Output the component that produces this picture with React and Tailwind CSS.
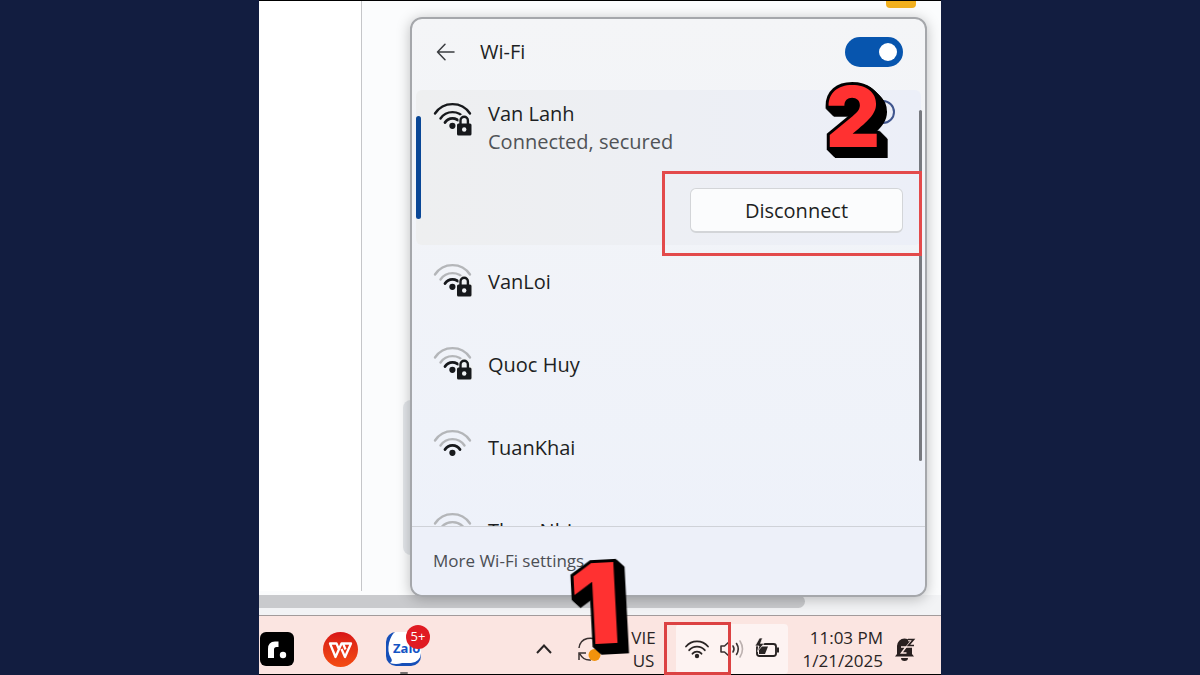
import { useState } from "react";

const networks = [
  { name: "VanLoi", secured: true },
  { name: "Quoc Huy", secured: true },
  { name: "TuanKhai", secured: false },
  { name: "Thao Nhi", secured: false },
];

const WifiSignal = ({ strong, secured }) => {
  const weak = strong ? "#17191c" : "#b4b6b9";
  return (
    <svg viewBox="0 0 40 36" className="w-10 h-9 shrink-0" fill="none" strokeLinecap="round">
      <path d="M2 13.5A21 21 0 0 1 37 13.5" stroke={weak} strokeWidth="2.4" />
      <path d="M7.5 18.5A14.5 14.5 0 0 1 31.5 18.5" stroke={weak} strokeWidth="2.4" />
      <path d="M12 22.5A8.8 8.8 0 0 1 27 22.5" stroke="#17191c" strokeWidth="2.8" />
      <circle cx="19.4" cy="25.8" r="3.1" fill="#17191c" />
      {secured && (
        <g>
          <path d="M23 36V21.500H25.500V19.500a5.700 5.700 0 0 1 11.400 0V21.500H40V36Z" fill="#f0f2f4" />
          <path d="M27.500 24V20.500a3.700 3.700 0 0 1 7.400 0V24" stroke="#17191c" strokeWidth="2.4" />
          <rect x="24" y="23.500" width="14.500" height="12" rx="1.500" fill="#17191c" />
          <circle cx="31.200" cy="29.500" r="2.200" fill="#f0f2f4" />
        </g>
      )}
    </svg>
  );
};

const WifiPanel = () => {
  const [enabled, setEnabled] = useState(true);

  return (
    <section className="relative z-10 ml-12 mr-3.5 flex flex-col rounded-xl border-2 border-[#a5a7ab] bg-gradient-to-b from-[#f4f5f7] to-[#edf1fa] shadow-[0_2px_14px_rgba(0,0,0,0.25)]">
      {/* Header */}
      <header className="flex h-[71px] items-center pb-1.5 pl-5 pr-[22px]">
        <button type="button" aria-label="Back" className="flex h-8 w-8 items-center justify-start pl-1">
          <svg viewBox="0 0 20 20" className="w-5 h-5" fill="none" stroke="#3a3c40" strokeWidth="1.5" strokeLinecap="round" strokeLinejoin="round">
            <path d="M18 10H1.500M9 2.200 1.500 10 9 17.800" />
          </svg>
        </button>
        <label htmlFor="wifi-switch" className="ml-4 flex-1 text-xl text-[#1d1f23]">
          Wi-Fi
        </label>
        <input
          id="wifi-switch"
          type="checkbox"
          role="switch"
          checked={enabled}
          onChange={(e) => setEnabled(e.target.checked)}
          className="flex h-[30px] w-[58px] appearance-none items-center rounded-full bg-gray-400 px-1.5 before:h-[18px] before:w-[18px] before:rounded-full before:bg-white checked:justify-end checked:bg-[#0755ae]"
        />
      </header>

      {/* Network list */}
      <div className="relative h-[437px] overflow-hidden border-b border-[#cfd2d8] px-1">
        <div className="relative flex h-[155px] flex-col rounded-md bg-gradient-to-r from-[#eeeff0] to-[#eceff8]">
          <span className="absolute left-0 top-[26px] h-[103px] w-[5px] rounded-full bg-[#0a4796]" />
          <div className="flex pl-[17px] pt-2.5">
            <WifiSignal strong secured />
            <div className="ml-[15px] text-xl leading-7">
              <p className="text-[#1d1f23]">Van Lanh</p>
              <p className="text-[#505357]">Connected, secured</p>
            </div>
            <button type="button" aria-label="Properties" className="ml-auto mr-[26px] h-6 w-6 rounded-full border-2 border-[#40568e]" />
          </div>
          <button
            type="button"
            className="mb-3 mr-[18px] mt-auto h-[45px] w-[213px] self-end rounded-md border border-b-2 border-[#d3d5d8] bg-[#fbfcfd] pt-0.5 text-xl text-[#1d1f23]"
          >
            Disconnect
          </button>
        </div>

        <ul>
          {networks.map((network) => (
            <li key={network.name} className="flex h-[83px] pl-[17px] pt-4">
              <WifiSignal secured={network.secured} />
              <span className="ml-[15px] mt-[7px] text-xl leading-7 text-[#1d1f23]">{network.name}</span>
            </li>
          ))}
        </ul>
        <span className="absolute right-[3px] top-5 h-[351px] w-[3px] rounded-full bg-[#77797f]" />
      </div>

      <footer className="flex h-[68px] items-center rounded-b-xl bg-[#edf0f9] pl-[21px]">
        <a href="#" className="text-[17px] leading-6 text-[#4b4e54]">
          More Wi-Fi settings
        </a>
      </footer>

      {/* Step 2 */}
      <div className="absolute right-[3px] top-[152px] h-[85px] w-[260px] border-3 border-[#e34a4b]" />
      <Step className="absolute right-[45px] top-[56px] text-[84px]">2</Step>
    </section>
  );
};

const Step = ({ className, children }) => (
  <span
    className={`${className} z-20 font-[Inter,sans-serif] font-black leading-none text-[#ff3131] [paint-order:stroke_fill] [-webkit-text-stroke:6px_#000] [filter:drop-shadow(1px_1px_0_#000)_drop-shadow(2px_2px_0_#000)_drop-shadow(4px_4px_0_#000)_drop-shadow(1px_1px_0_#000)]`}
  >
    {children}
  </span>
);

const Taskbar = () => (
  <footer className="relative flex h-[59px] items-center border-b border-black bg-[#fbe5e1] pr-[24px] pt-2">
    <button type="button" aria-label="r." className="ml-px flex h-[34px] w-[34px] rounded-md bg-black">
      <svg viewBox="0 0 34 34" className="w-full h-full">
        <path d="M8 26V17Q8 9.500 15 9.500H18.500V15H16.500Q14 15 14 17.500V26Z" fill="#fff" />
        <circle cx="23" cy="23" r="3.200" fill="#fff" />
      </svg>
    </button>
    <button type="button" aria-label="WPS" className="ml-[29px] h-[35px] w-[35px] rounded-full bg-gradient-to-b from-[#d81316] to-[#f44b12]">
      <svg viewBox="0 0 35 35" fill="none" stroke="#fff" strokeWidth="2.300" strokeLinejoin="round">
        <path d="M16 17.500 13.500 11.500H7L12.500 25 18.500 11.500H28L22 25 18.500 17" />
        <path d="M20 11.500 22.500 17.500" />
      </svg>
    </button>
    <button type="button" aria-label="Zalo" className="relative ml-[28px] h-9 w-9">
      <svg viewBox="0 0 36 36" className="w-9 h-9">
        <rect x="0" y="1" width="35" height="34" rx="10" fill="#164fb8" />
        <path d="M9 1H25A10 10 0 0 1 35 11V22A10 10 0 0 1 25 32H16Q10 34 4 32Q7 30 5 27Q1 21 3 12Q5 4 9 1Z" fill="#fff" />
      </svg>
      <span className="absolute left-[7px] top-[9px] text-[13px] leading-4 font-bold text-[#1354c4]">Zalo</span>
      <span className="absolute -right-2 -top-[6px] flex h-6 w-6 items-center justify-center rounded-full bg-[#e01b22] text-[13px] text-white">
        5+
      </span>
      <span className="absolute -bottom-[7px] left-3.5 h-[2px] w-2 rounded-full bg-[#77706f]" />
    </button>

    <div className="ml-auto flex items-center">
      <button type="button" aria-label="Show hidden icons">
        <svg viewBox="0 0 18 18" className="w-[18px] h-[18px]" fill="none" stroke="#292424" strokeWidth="2">
          <path d="M2 13 9 5.500l7 7.500" />
        </svg>
      </button>
      <button type="button" aria-label="Updates" className="ml-6">
        <svg viewBox="0 0 26 26" className="w-[26px] h-[26px]" fill="none" stroke="#393131" strokeWidth="1.5">
          <path d="M2 12A11 11 0 0 1 22 7M2 24V17H9M3 18A11 11 0 0 0 14 24" />
          <circle cx="17.500" cy="19" r="6" fill="#f2930c" stroke="none" />
        </svg>
      </button>
      <button type="button" className="ml-6 w-8 text-[17px] leading-[23px] text-[#292424]">
        VIE
        <br />
        US
      </button>
      <div className="relative ml-[17px] flex h-[50px] w-[112px] items-center justify-between rounded bg-[#fdf3f2] px-2">
        <svg viewBox="0 0 26 22" className="w-[26px] h-[22px]" fill="none" stroke="#292424" strokeWidth="1.8" strokeLinecap="round">
          <path d="M2 8.500A14.500 14.500 0 0 1 24 8.500M5.200 12.200A10.200 10.200 0 0 1 20.800 12.200M8.500 15.700A6 6 0 0 1 17.500 15.700" />
          <circle cx="13" cy="18" r="2.200" fill="#292424" stroke="none" />
        </svg>
        <svg viewBox="0 0 26 22" className="w-[26px] h-[22px]" fill="none" stroke="#393131" strokeWidth="1.6" strokeLinecap="round" strokeLinejoin="round">
          <path d="M2 8h3.500l5-4.500v15L5.500 14H2Z" />
          <path d="M14 8q2 3 0 6M17.500 5.500q3.500 5.500 0 11" />
          <path d="M21 3q5 8 0 16" stroke="#bcb1b0" />
        </svg>
        <svg viewBox="0 0 26 22" className="w-[26px] h-[22px]" fill="none">
          <rect x="3" y="6" width="19" height="12" rx="2.500" stroke="#292424" strokeWidth="1.9" />
          <path d="M23 9.500h2v5h-2Z" fill="#292424" />
          <path d="M5 8.500h9l-3 7.500H5Z" fill="#292424" />
          <path d="M5.500 0 1 8h4L3.500 13.500 10 5.500H6.500L8.500 0Z" fill="#292424" stroke="#fdf3f2" strokeWidth=".7" />
        </svg>
        {/* Step 1 */}
        <span className="absolute -left-3 top-[-2px] h-[53px] w-[67px] border-3 border-[#dc4243]" />
      </div>
      <button type="button" className="ml-3.5 text-right text-[17px] leading-[23px] text-[#292424]">
        11:03 PM
        <br />
        1/21/2025
      </button>
      <button type="button" aria-label="Notifications" className="ml-2.5">
        <svg viewBox="0 0 24 24" className="w-6 h-6" fill="#292020">
          <path d="M4 17V9a7.500 7.500 0 0 1 15 0v8l2 2.500H2Z" />
          <path d="M8 21h7a3.500 3 0 0 1-7 0Z" />
          <path d="M8 10h5L8.500 16H13.500" fill="none" stroke="#fbe5e1" strokeWidth="1.5" />
          <path d="M15 2.500h5.500L15.500 9h6" fill="none" stroke="#fbe5e1" strokeWidth="3.600" />
          <path d="M15 2.500h5.500L15.500 8.500H21" fill="none" stroke="#292020" strokeWidth="1.7" />
        </svg>
      </button>
    </div>
    <Step className="absolute left-[311px] -top-[69px] -rotate-3 text-[112px]">1</Step>
  </footer>
);

const App = () => {
  return (
    <div className="flex min-h-screen justify-center bg-[#121d40] font-['Open_Sans','Noto_Sans',sans-serif]">
      <main className="flex w-full max-w-[682px] flex-col border-t border-black bg-[#fbfcfd]">
        <div className="flex">
          <aside className="mb-1.5 w-[103px] shrink-0 border-r border-[#c5c6c9] bg-white" />
          <div className="relative min-w-0 flex-1">
            <div className="mb-[9px] ml-auto mr-[25px] h-[7px] w-[30px] rounded-b bg-[#f2b01e]" />
            <span className="absolute bottom-[42px] left-[41px] h-[155px] w-6 rounded-l-lg bg-[#e3e6ea]" />
            <WifiPanel />
          </div>
        </div>
        <div className="-mt-0.5 h-[21px] border-b border-[#a29b9b] bg-[#f2f3f5]">
          <div className="h-[13px] w-4/5 rounded-r-full bg-[#c9cacd]" />
        </div>
        <Taskbar />
      </main>
    </div>
  );
};

export default App;
